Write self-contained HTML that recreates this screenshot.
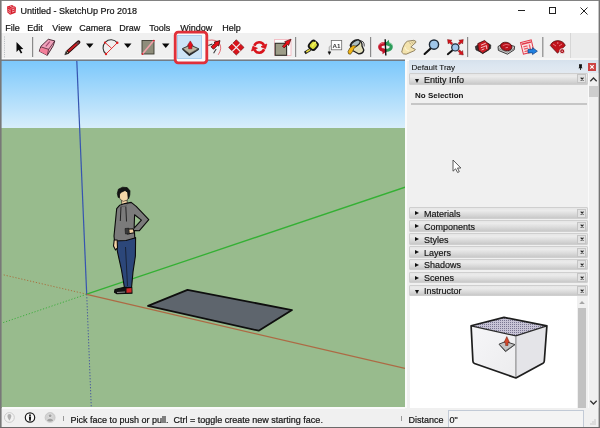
<!DOCTYPE html>
<html><head><meta charset="utf-8">
<style>
*{margin:0;padding:0;box-sizing:border-box}
html,body{width:600px;height:428px;overflow:hidden;background:#fff;font-family:"Liberation Sans",sans-serif;}
.a{position:absolute}
#win{will-change:transform;position:absolute;left:0;top:0;width:600px;height:428px;background:#fff;overflow:hidden}
.t{position:absolute;white-space:nowrap;color:#141414;font-size:9px;line-height:10px;-webkit-text-stroke:0.2px #141414}
.menu span{position:absolute;top:23px;font-size:9px;line-height:10px;color:#141414;-webkit-text-stroke:0.2px #141414}
.sep{position:absolute;top:38px;width:1px;height:20px;background:#b4b4b4}
.hdr{position:absolute;left:409px;width:178.5px;height:11.6px;background:linear-gradient(#e6e6e6,#ebebeb 25%,#dcdcdc 60%,#c9c9c9);border:1px solid #cfcfcf;border-radius:1px}
.hdr .tri{position:absolute;left:4.6px;top:2.9px;width:0;height:0;border-top:2.8px solid transparent;border-bottom:2.8px solid transparent;border-left:4.4px solid #111}
.hdr .tri.d{left:5px;top:4px;border-left:2.5px solid transparent;border-right:2.5px solid transparent;border-top:4px solid #111;border-bottom:0}
.hdr .lab{position:absolute;left:14px;top:0.6px;font-size:9px;line-height:10px;color:#111;-webkit-text-stroke:0.15px #111}
.hdr .x{position:absolute;right:0.5px;top:0.5px;width:9px;height:9px;border:1px solid #c4c4c4;background:#e2e2e2}
.hdr .x svg{position:absolute;left:-0.5px;top:-0.5px}
</style></head><body>
<div id="win">
  <!-- title -->
  <svg class="a" style="left:4px;top:2px" width="16" height="16" viewBox="4 2 16 16">
    <path d="M7,6.6 L12,4.9 L16,7.3 L15.6,12.8 L10.2,14.8 L7.4,12.6 Z" fill="#d51f2c"/>
    <path d="M7,6.6 L10.8,8.6 L16,7.3 M10.8,8.6 L10.2,14.8" fill="none" stroke="#f07080" stroke-width="0.6"/>
    <path d="M8.2,9.5 L10.3,10.6 M8.3,11.6 L10.3,12.6 M12,10 L14.6,9 M12,12 L14.6,11" stroke="#fbd0d8" stroke-width="0.8"/>
    <path d="M10,6.2 L12.5,7.4 L14,6.8" stroke="#f8c0c8" stroke-width="0.7" fill="none"/>
  </svg>
  <div class="t" style="left:20.5px;top:5.5px;font-size:9px">Untitled - SketchUp Pro 2018</div>
  <div class="a" style="left:518px;top:10px;width:7px;height:1px;background:#222"></div>
  <div class="a" style="left:549px;top:7px;width:7px;height:7px;border:1px solid #222"></div>
  <svg class="a" style="left:580px;top:7px" width="8" height="8" viewBox="0 0 8 8"><path d="M0.5 0.5 L7.5 7.5 M7.5 0.5 L0.5 7.5" stroke="#222" stroke-width="1"/></svg>

  <!-- menu -->
  <div class="menu">
    <span style="left:5.3px">File</span>
    <span style="left:27.3px">Edit</span>
    <span style="left:52.3px">View</span>
    <span style="left:79.3px">Camera</span>
    <span style="left:119.3px">Draw</span>
    <span style="left:149.3px">Tools</span>
    <span style="left:180.3px">Window</span>
    <span style="left:222.3px">Help</span>
  </div>

  <!-- toolbar -->

  <svg class="a" style="left:0;top:30px" width="600" height="35" viewBox="0 30 600 35">
    <rect x="1" y="33" width="569.5" height="27" fill="#f0f0f0"/>
    <rect x="570.5" y="33" width="28" height="26" fill="#ebebeb"/>
    <rect x="570" y="33" width="1" height="26" fill="#d6d6d6"/>
    <rect x="4" y="36.5" width="1" height="1" fill="#b4b8bc"/><rect x="4" y="38.7" width="1" height="1" fill="#b4b8bc"/><rect x="4" y="40.9" width="1" height="1" fill="#b4b8bc"/><rect x="4" y="43.1" width="1" height="1" fill="#b4b8bc"/><rect x="4" y="45.3" width="1" height="1" fill="#b4b8bc"/><rect x="4" y="47.5" width="1" height="1" fill="#b4b8bc"/><rect x="4" y="49.7" width="1" height="1" fill="#b4b8bc"/><rect x="4" y="51.9" width="1" height="1" fill="#b4b8bc"/><rect x="4" y="54.1" width="1" height="1" fill="#b4b8bc"/><rect x="4" y="56.3" width="1" height="1" fill="#b4b8bc"/>
    <!-- select -->
    <path d="M16.5,42 L16.5,52 L18.8,49.8 L20.8,53.5 L22.3,52.7 L20.4,49.2 L23.3,49 Z" fill="#0a0a0a"/>
    <rect x="32" y="37" width="1.2" height="20" fill="#8a8a8a"/>
    <!-- eraser -->
    <path d="M48.3,39.3 L54.8,40.9 L53.2,45.8 L47.3,55.3 L39.3,51.2 L40.9,46.3 Z" fill="#f0a2bb" stroke="#3a1a26" stroke-width="0.9" stroke-linejoin="round"/>
    <path d="M41.3,47 L48.6,49.3 L47.3,55.3 L39.5,51.2 Z" fill="#f37f9a"/>
    <path d="M41.3,47 L48.6,49.3 L54.6,41.2 M48.6,49.3 L47.3,55.3" fill="none" stroke="#3a1a26" stroke-width="0.7"/>
    <path d="M45.8,46.3 L49.8,41.6" stroke="#a04870" stroke-width="1.1"/>
    <!-- pencil -->
    <path d="M67.8,51.8 L78.6,42.2" stroke="#2a0a0a" stroke-width="3.6" stroke-linecap="round"/>
    <path d="M68.3,51.3 L77.2,43.4" stroke="#cc1f24" stroke-width="2"/>
    <path d="M76.6,44 L78.8,42" stroke="#6a4048" stroke-width="2"/>
    <path d="M64.8,54.8 L66.2,51 L68.8,53.4 Z" fill="#2a2a2a" stroke="#2a2a2a" stroke-width="0.6"/>
    <path d="M66.6,51.6 L68.2,53" stroke="#d8b890" stroke-width="1"/>
    <path d="M86,43.5 L93.5,43.5 L89.75,48 Z" fill="#080808"/>
    <!-- arc -->
    <path d="M106,54 A8,8 0 1 1 117.3,42.8" fill="none" stroke="#333" stroke-width="1.1"/>
    <path d="M105,42.5 L111.5,48.2 M117.3,42.8 L106,54" stroke="#e02020" stroke-width="0.9"/>
    <circle cx="105" cy="42.5" r="1.1" fill="#e02020"/><circle cx="117.3" cy="42.8" r="1.2" fill="#e02020"/><circle cx="106" cy="54" r="1.2" fill="#e02020"/>
    <path d="M124,43.5 L131.5,43.5 L127.75,48 Z" fill="#080808"/>
    <!-- rectangle -->
    <rect x="142" y="40.5" width="12" height="13.5" fill="#8f8d7b" stroke="#3a3a30" stroke-width="0.9"/>
    <path d="M142.5,54 L153.8,40.6" stroke="#f0a0a8" stroke-width="1.6"/>
    <circle cx="142.5" cy="54" r="0.9" fill="#d82030"/><circle cx="153.8" cy="40.6" r="0.9" fill="#d82030"/>
    <path d="M162,43.5 L169.5,43.5 L165.75,48 Z" fill="#080808"/>
    <!-- follow me -->
    <path d="M208.3,40.3 Q216,39 219.5,43.5 Q222.5,48.5 218.2,54.8" fill="none" stroke="#e06068" stroke-width="0.9"/>
    <path d="M208.3,45.6 L212.4,43.9 M216.2,49 L213.6,53.2" stroke="#3a3a3a" stroke-width="1.1"/>
    <path d="M211,46.8 L215,43.2 L214.3,42 L220,40.6 L218.6,46 L217.5,45.3 L213.5,49.3 Z" fill="#e81018" stroke="#3a0a0a" stroke-width="0.8" stroke-linejoin="round"/>
    <!-- move -->
    <path d="M236.3,39.7 L244,47.4 L236.3,55 L228.6,47.4 Z" fill="#d8141c" stroke="#5a0a0a" stroke-width="0.6" stroke-linejoin="round"/>
    <path d="M232.2,43.3 L240.4,51.5 M240.4,43.3 L232.2,51.5" stroke="#f0f0f0" stroke-width="1.1"/>
    <!-- rotate -->
    <path d="M254.3,45.7 A5.2,5.2 0 0 1 263.9,45.3" fill="none" stroke="#d8141c" stroke-width="2.6"/>
    <path d="M261.0,46.7 L266.8,44.0 L265.5,48.7 Z" fill="#d8141c" stroke="#d8141c" stroke-width="0.8" stroke-linejoin="round"/>
    <path d="M264.1,49.3 A5.2,5.2 0 0 1 254.5,49.7" fill="none" stroke="#d8141c" stroke-width="2.6"/>
    <path d="M257.4,48.3 L251.6,51.0 L252.9,46.3 Z" fill="#d8141c" stroke="#d8141c" stroke-width="0.8" stroke-linejoin="round"/>
    <!-- scale -->
    <rect x="274.6" y="39.4" width="16.4" height="16" fill="#fcfcfc" stroke="#f2b0b8" stroke-width="0.8"/>
    <rect x="275.2" y="43.3" width="11.4" height="12" fill="#9d9d88" stroke="#2f2f28" stroke-width="1.1"/>
    <path d="M282.4,46.2 L285.8,42.9 L284.6,41.7 L291,39.2 L288.6,45.5 L287.5,44.5 L284.1,47.9 Z" fill="#e81018" stroke="#4a0a0a" stroke-width="0.7" stroke-linejoin="round"/>
    <rect x="295" y="37" width="1.2" height="20" fill="#8a8a8a"/>
    <!-- tape -->
    <path d="M304.8,53 L310.3,49.4" stroke="#1a1a1a" stroke-width="3"/>
    <path d="M306.3,52 L310.3,49.4" stroke="#e6d83a" stroke-width="1.5"/>
    <rect x="309.5" y="41" width="7.6" height="8.6" rx="2.8" transform="rotate(40 313.3 45.3)" fill="#d8dc3a" stroke="#141414" stroke-width="1.8"/>
    <path d="M312.2,46.5 Q313.5,42.8 316,42.3" stroke="#f4f060" stroke-width="1.6" fill="none"/>
    <!-- text -->
    <rect x="331.3" y="40.4" width="10.4" height="9.4" fill="#fff" stroke="#6a6a6a" stroke-width="0.8"/>
    <text x="332.6" y="47.6" font-size="6.2" font-weight="bold" font-family="Liberation Sans" fill="#3a3a3a">A1</text>
    <path d="M331,45.5 L329.3,47.2 L329.3,52" fill="none" stroke="#b8b8b8" stroke-width="1.3"/>
    <path d="M328,51.8 L330.8,51.8 L329.4,54.6 Z" fill="#0a0a0a" stroke="#0a0a0a" stroke-width="0.5"/>
    <!-- paint -->
    <path d="M359.5,40.8 Q364.8,40.5 364.2,46.5" fill="none" stroke="#333" stroke-width="0.9"/>
    <path d="M350.2,45.2 Q352.5,39.5 358.5,40 Q362.5,41.5 362,46 L363.8,50 Q363,54 358.5,53.8 L352.5,50.5 Z" fill="#e2deb8" stroke="#1c1c1c" stroke-width="1.3" stroke-linejoin="round"/>
    <ellipse cx="355.6" cy="43.6" rx="5" ry="2.6" transform="rotate(-35 355.6 43.6)" fill="#a9bcc0" stroke="#1c1c1c" stroke-width="1.1"/>
    <path d="M353,45.5 Q349.2,47.5 348,51.5 Q347.8,54.8 350.5,54.2 Q352.6,52 354,48.5 Q355.2,46.5 357,46.3 Z" fill="#f2b514" stroke="#3a3010" stroke-width="0.6"/>
    <rect x="370" y="37" width="1.2" height="20" fill="#8a8a8a"/>
    <!-- orbit -->
    <path d="M385.5,43.8 Q379.8,43.5 379.8,47 Q380,50.5 385.5,50.5" fill="none" stroke="#c4162a" stroke-width="3.4"/>
    <path d="M384.5,42.6 Q380,42.8 378.8,45.5" fill="none" stroke="#e87080" stroke-width="1"/>
    <path d="M385.8,43.6 Q391.2,43.6 391.2,47 Q391,50.3 386,50.3" fill="none" stroke="#2c9c5a" stroke-width="3.2"/>
    <path d="M387,42.4 Q391,42.5 392.2,45" fill="none" stroke="#90d4a8" stroke-width="1"/>
    <path d="M382.5,54.2 L387,51 L382.5,47.8 Z" fill="#c4162a"/>
    <path d="M389,39.8 L385.2,43.2 L389,46.6 Z" fill="#2c9c5a"/>
    <path d="M385.2,39.3 L385.8,55.5" stroke="#111" stroke-width="1.4"/>
    <!-- pan -->
    <path d="M401.7,52.2 Q402.5,47.5 404.2,44.8 Q405.5,42 407.5,41.2 L413.8,40.3 Q416.2,40.8 416,42.3 L410.8,47 L415.4,49.5 Q414.5,51 413.2,51.2 L406.2,54.2 Q403,54.5 401.7,52.2 Z" fill="#f3e3ae" stroke="#7a6a48" stroke-width="0.8" stroke-linejoin="round"/>
    <path d="M409.5,42.5 L411,44.5 M411.5,41.8 L413,43.8 M413.5,41.3 L414.6,42.8" stroke="#9a8a68" stroke-width="0.6"/>
    <path d="M405,47 Q405.5,50.5 409,50.8" fill="none" stroke="#fbf3d0" stroke-width="1.2"/>
    <!-- zoom -->
    <path d="M430.6,48.4 L424.6,54" stroke="#111" stroke-width="2.1" stroke-linecap="round"/>
    <circle cx="434" cy="44.6" r="4.6" fill="#9fc6ea" stroke="#1e2a38" stroke-width="1.4"/>
    <!-- zoom extents -->
    <path d="M452.5,50.2 L447.8,54.2" stroke="#111" stroke-width="1.9" stroke-linecap="round"/>
    <circle cx="455.3" cy="47.4" r="3.6" fill="#9fc6ea" stroke="#1e2a38" stroke-width="1.2"/>
    <path d="M447.5,39.5 L452,40.2 L450.8,41.3 L452.8,43.3 L451.3,44.8 L449.3,42.8 L448.2,44 Z" fill="#d8141c" stroke="#5a0a0a" stroke-width="0.4"/>
    <path d="M463.3,39.5 L462.6,44 L461.5,42.8 L459.5,44.8 L458,43.3 L460,41.3 L458.8,40.2 Z" fill="#d8141c" stroke="#5a0a0a" stroke-width="0.4"/>
    <path d="M463.3,55 L458.8,54.3 L460,53.2 L458,51.2 L459.5,49.7 L461.5,51.7 L462.6,50.5 Z" fill="#d8141c" stroke="#5a0a0a" stroke-width="0.4"/>
    <rect x="467" y="37" width="1.2" height="20" fill="#8a8a8a"/>
    <!-- 3d warehouse -->
    <path d="M475.3,46.5 L479.5,44 L479.5,51.5 L476,50 Z M487.5,43 L490.8,45 L490.6,48.5 L487.5,50.5 Z" fill="#3a3a3a" stroke="#1a1a1a" stroke-width="0.6" stroke-linejoin="round"/>
    <path d="M477.8,43.6 L484.6,40.5 L489.4,44.8 L488.6,50 L482.7,53.6 L478.4,50.6 Z" fill="#c81c24" stroke="#3a0808" stroke-width="0.8" stroke-linejoin="round"/>
    <path d="M478.5,50.4 L482.7,53.3 L488.6,49.6" fill="none" stroke="#2a2a2a" stroke-width="1"/>
    <path d="M481,45.2 L485.8,43.2 M480.8,47.8 L486.5,45.6 L486.8,49 M481.5,50 L484.3,48.9" stroke="#f8d0d4" stroke-width="0.9" fill="none"/>
    <!-- extension warehouse -->
    <path d="M498,46.6 L503.5,43.2 L514.6,46.4 L514.2,49.8 L507.5,54.2 L498.4,50.4 Z" fill="#cfcfcf" stroke="#2a2a2a" stroke-width="0.9" stroke-linejoin="round"/>
    <path d="M499,48.8 L507.5,52.2 L513.8,48.6" fill="none" stroke="#555" stroke-width="0.6"/>
    <ellipse cx="506.2" cy="46.5" rx="5.8" ry="4.2" transform="rotate(12 506.2 46.5)" fill="#b8121c" stroke="#3a0808" stroke-width="0.7"/>
    <path d="M502.8,45.6 Q506,43.6 509.5,45" fill="none" stroke="#e8707a" stroke-width="0.9"/>
    <path d="M505.5,47.8 L508,47.3" stroke="#f0a0a8" stroke-width="0.8"/>
    <!-- send to layout -->
    <g transform="rotate(-14 527.5 47)">
    <rect x="521.8" y="41" width="11" height="12" fill="#fbe4e6" stroke="#e23a4a" stroke-width="1"/>
    <path d="M522.5,43 L532,43" stroke="#e23a4a" stroke-width="1.6"/>
    <path d="M523.5,45.8 L527.8,45.8 M523.5,48.3 L527.8,48.3 M523.5,50.8 L527.8,50.8 M529.8,45 L529.8,51.5" stroke="#ec5a68" stroke-width="1.3"/>
    </g>
    <path d="M528,49.3 L532.5,49.3 L532.5,47.6 L537.4,51.2 L532.5,54.6 L532.5,52.9 L528,52.9 Z" fill="#2080e0" stroke="#0a3070" stroke-width="0.6" stroke-linejoin="round"/>
    <rect x="542.2" y="37" width="1.2" height="20" fill="#8a8a8a"/>
    <!-- ruby -->
    <path d="M550.3,45.5 Q552,41 557.8,40.6 Q563.5,41 565.3,45.5 L557.5,53.2 Z" fill="#c0141c" stroke="#4a0808" stroke-width="0.7" stroke-linejoin="round"/>
    <path d="M553,44 L556,46 M559,46 L562,44 M557.8,42 L557.8,44" stroke="#f09098" stroke-width="0.8"/>
    <circle cx="562.2" cy="51.2" r="2.5" fill="#a8141c" stroke="#f0f0f0" stroke-width="0.9"/>
    <circle cx="562.2" cy="51.2" r="0.8" fill="#f0b0b8"/>
  </svg>
  <div class="a" style="left:1px;top:58px;width:404px;height:1px;background:#fbfbfb"></div>
  <div class="a" style="left:1px;top:59px;width:404px;height:1px;background:#b0b3b6"></div>
  <div class="a" style="left:1px;top:60px;width:404px;height:1px;background:#737c85"></div>
  <div class="a" style="left:405px;top:58px;width:194px;height:2px;background:#f6f6f6"></div>

  <!-- viewport -->

  <svg class="a" style="left:1px;top:61px" width="404" height="347" viewBox="1 61 404 347">
    <defs><linearGradient id="sky" x1="0" y1="0" x2="0" y2="1"><stop offset="0" stop-color="#7cc8fb"/><stop offset="1" stop-color="#d8eefb"/></linearGradient></defs>
    <rect x="1" y="61" width="404" height="67.5" fill="url(#sky)"/>
    <rect x="1" y="128" width="404" height="280.5" fill="#98bb8d"/>
    <!-- dotted axes -->
    <line x1="86.7" y1="294.2" x2="2" y2="274.5" stroke="#a8703f" stroke-width="1" stroke-dasharray="1.2 1.8"/>
    <line x1="86.7" y1="294.2" x2="2" y2="323" stroke="#3fae3f" stroke-width="1" stroke-dasharray="1.2 1.8"/>
    <line x1="86.7" y1="294.2" x2="91.3" y2="408" stroke="#4050a0" stroke-width="1" stroke-dasharray="1.2 1.8"/>
    <!-- solid axes -->
    <line x1="76.8" y1="61" x2="86.7" y2="294.2" stroke="#3654b0" stroke-width="1.2"/>
    <line x1="86.7" y1="294.2" x2="405" y2="187.2" stroke="#34b034" stroke-width="1.3"/>
    <line x1="86.7" y1="294.4" x2="405" y2="368.4" stroke="#ad6a44" stroke-width="1.2"/>
    <!-- rectangle face -->
    <polygon points="187.5,289.9 292,310.1 258.7,330.7 148,305.9" fill="#5e656d" stroke="#0e0e0e" stroke-width="1.8" stroke-linejoin="round"/>
    <!-- person -->
    <g stroke="#0b0b0b" stroke-width="1.1" stroke-linejoin="round">
      <path d="M116,240 L135.6,237.5 L135.4,256 L133,272 L131.5,288 L124.5,288 L121.5,270 L117.5,252 Z" fill="#2c477a"/>
      <path d="M125.5,247 L127.5,286" fill="none" stroke-width="0.6"/>
      <path d="M115,289.5 L124.2,287.2 L131.8,287.5 L132,293.2 L117,293.8 L114.5,292.2 Z" fill="#141414"/>
      <path d="M126.5,288.5 L131.5,288 L131.6,292.5 L126.5,292.8 Z" fill="#d02828" stroke="none"/>
      <path d="M117,292.5 L125,292 " stroke="#ddd" stroke-width="0.6"/>
      <path d="M121.5,200.5 L127,200 L127.5,205.5 L122,206.5 Z" fill="#f5d5a6" stroke-width="0.6"/>
      <path d="M119.8,205.2 L124.7,203.6 L131.2,202.4 L136.2,206.4 L148.8,219.6 L139.2,230.8 L134.4,230.6 L134.8,238 L126,240.5 L114.5,241 L114,236 L116.7,208.6 Z" fill="#7b7b7b"/>
      <path d="M134.6,214.8 L141.4,220.1 L134.1,228.2 Z" fill="#98bb8d"/>
      <path d="M114.2,240 L117.2,240 L117.5,248 L115.5,250 L113.5,246 Z" fill="#f2d2a4"/>
      <path d="M127,229.2 L133.3,228.8 L134.3,232.8 L127.5,234 Z" fill="#f2d2a4"/>
      <path d="M125,228.5 L128.8,228.2 L129.5,233.8 L125.5,234 Z" fill="#3a3a3a" stroke-width="0.5"/>
      <path d="M121,206.5 L120.3,221 M125.8,206.5 L126.5,221.5" fill="none" stroke-width="0.8"/>
      <path d="M120,205 Q123,208.5 127.5,204.5" fill="none" stroke="#555" stroke-width="0.7"/>
      <path d="M119.2,192.6 L124.5,190 L127.8,192.5 L128.4,197 L127.4,200 L123.2,201.4 L120,199.2 L119,195.5 Z" fill="#f5d5a6" stroke-width="0.5"/>
      <path d="M117.3,193.5 L118.4,189.2 L122.6,187.2 L127.2,187.6 L130,190.8 L129.8,195 L128.6,198.8 L128,196.5 L127.8,192.6 L125.2,190.4 L121.5,192.2 L119.6,194 L119.4,197.6 L118.2,197.4 Z" fill="#141414" stroke-width="0.7"/>
    </g>
  </svg>
  <div class="a" style="left:2px;top:407px;width:403px;height:1px;background:#fafafa"></div>

  <!-- right panel -->
  <div class="a" style="left:405px;top:61px;width:193px;height:347px;background:#f0f0f0"></div>
  <div class="a" style="left:405px;top:61px;width:1.5px;height:347px;background:#fbfbfb"></div>
  <div class="a" style="left:408.6px;top:60.3px;width:190px;height:12.4px;background:linear-gradient(#d6e1ec,#dce6f0 40%,#e2e9f1)"></div>
  <div class="t" style="left:411.5px;top:63px;color:#111;font-size:8.1px;-webkit-text-stroke:0.1px #111">Default Tray</div>
  <svg class="a" style="left:577px;top:63px" width="7" height="8" viewBox="0 0 7 8"><path d="M2,1.2 L5,1.2 L4.8,4.2 L5.6,5.2 L1.4,5.2 L2.2,4.2 Z" fill="#111"/><rect x="3" y="5.2" width="1" height="1.6" fill="#111"/></svg>
  <div class="a" style="left:588.4px;top:63.3px;width:8px;height:7.6px;background:#cc4444"></div>
  <svg class="a" style="left:588.4px;top:63.3px" width="8" height="8" viewBox="0 0 8 8"><path d="M2.3,2.2 L5.7,5.6 M5.7,2.2 L2.3,5.6" stroke="#fff" stroke-width="1.2"/></svg>

  <div class="hdr" style="top:72.9px;height:12.4px"><div class="tri d" style="top:5px"></div><div class="lab" style="top:1.5px">Entity Info</div><div class="x"><svg width="8" height="8" viewBox="0 0 8 8"><path d="M2.7,2.7 L5.5,5.5 M5.5,2.7 L2.7,5.5" stroke="#222" stroke-width="1.1"/></svg></div></div>
  <div class="t" style="left:415px;top:90.5px;font-weight:bold;color:#111;font-size:8px;-webkit-text-stroke:0">No Selection</div>
  <div class="a" style="left:411px;top:103px;width:176px;height:2px;background:#c6c6c6"></div>
  <!-- scrollbar outer -->
  <div class="a" style="left:587.5px;top:73px;width:1px;height:335px;background:#fafafa"></div>
  <svg class="a" style="left:589px;top:76px" width="9" height="7" viewBox="0 0 9 7"><path d="M1.3,5.2 L4.5,2 L7.7,5.2" fill="none" stroke="#333" stroke-width="1.3"/></svg>
  <div class="a" style="left:589px;top:85.5px;width:9px;height:11px;background:#cdcdcd"></div>
  <svg class="a" style="left:589px;top:399px" width="9" height="7" viewBox="0 0 9 7"><path d="M1.3,1.8 L4.5,5 L7.7,1.8" fill="none" stroke="#333" stroke-width="1.3"/></svg>
  <div class="hdr" style="top:207.2px"><div class="tri"></div><div class="lab">Materials</div><div class="x"><svg width="8" height="8" viewBox="0 0 8 8"><path d="M2.7,2.7 L5.5,5.5 M5.5,2.7 L2.7,5.5" stroke="#222" stroke-width="1.1"/></svg></div></div>
  <div class="hdr" style="top:220.2px"><div class="tri"></div><div class="lab">Components</div><div class="x"><svg width="8" height="8" viewBox="0 0 8 8"><path d="M2.7,2.7 L5.5,5.5 M5.5,2.7 L2.7,5.5" stroke="#222" stroke-width="1.1"/></svg></div></div>
  <div class="hdr" style="top:233.1px"><div class="tri"></div><div class="lab">Styles</div><div class="x"><svg width="8" height="8" viewBox="0 0 8 8"><path d="M2.7,2.7 L5.5,5.5 M5.5,2.7 L2.7,5.5" stroke="#222" stroke-width="1.1"/></svg></div></div>
  <div class="hdr" style="top:246px"><div class="tri"></div><div class="lab">Layers</div><div class="x"><svg width="8" height="8" viewBox="0 0 8 8"><path d="M2.7,2.7 L5.5,5.5 M5.5,2.7 L2.7,5.5" stroke="#222" stroke-width="1.1"/></svg></div></div>
  <div class="hdr" style="top:258.9px"><div class="tri"></div><div class="lab">Shadows</div><div class="x"><svg width="8" height="8" viewBox="0 0 8 8"><path d="M2.7,2.7 L5.5,5.5 M5.5,2.7 L2.7,5.5" stroke="#222" stroke-width="1.1"/></svg></div></div>
  <div class="hdr" style="top:271.8px"><div class="tri"></div><div class="lab">Scenes</div><div class="x"><svg width="8" height="8" viewBox="0 0 8 8"><path d="M2.7,2.7 L5.5,5.5 M5.5,2.7 L2.7,5.5" stroke="#222" stroke-width="1.1"/></svg></div></div>
  <div class="hdr" style="top:284.6px"><div class="tri d"></div><div class="lab">Instructor</div><div class="x"><svg width="8" height="8" viewBox="0 0 8 8"><path d="M2.7,2.7 L5.5,5.5 M5.5,2.7 L2.7,5.5" stroke="#222" stroke-width="1.1"/></svg></div></div>

  <div class="a" style="left:409.5px;top:296px;width:167px;height:112.5px;background:#fff"></div>
  <div class="a" style="left:576.5px;top:296px;width:11px;height:112.5px;background:#f0f0f0"></div>
  <svg class="a" style="left:578px;top:300px" width="8" height="5" viewBox="0 0 8 5"><path d="M1.2,4 L4,1 L6.8,4 Z" fill="#a6a6a6"/></svg>
  <div class="a" style="left:577.7px;top:308.2px;width:8.6px;height:100.3px;background:#c2c2c2"></div>

  <svg class="a" style="left:409px;top:296px" width="167" height="112" viewBox="409 296 167 112">
    <defs>
      <pattern id="dots" x="0" y="0" width="2" height="2" patternUnits="userSpaceOnUse">
        <rect width="2" height="2" fill="#c8c4d6"/>
        <rect x="0" y="0" width="1" height="1" fill="#7a7692"/>
      </pattern>
      <linearGradient id="lf" x1="0" y1="0" x2="1" y2="1"><stop offset="0" stop-color="#f6f6f8"/><stop offset="1" stop-color="#ececee"/></linearGradient>
    </defs>
    <path d="M471.1,325.8 L515.9,335.9 L515.9,378 L474.5,363.5 Q472.9,362.8 472.9,361 Z" fill="url(#lf)"/>
    <path d="M515.9,335.9 L546.9,325.8 L544.3,361 Q544.2,362.5 543,363.2 L515.9,378 Z" fill="#e4e4e8"/>
    <path d="M471.1,325.8 L504,317.4 L546.9,325.8 L515.9,335.9 Z" fill="url(#dots)"/>
    <path d="M515.9,336.5 L515.9,377.5" stroke="#707070" stroke-width="0.9"/>
    <path d="M471.1,325.8 L515.9,335.9 L546.9,325.8" fill="none" stroke="#2a2a2a" stroke-width="1.3"/>
    <path d="M471.1,325.8 L504,317.4 L546.9,325.8 L544.3,361 Q544.2,362.5 543,363.2 L515.9,378 L474.5,363.5 Q472.9,362.8 472.9,361 Z" fill="none" stroke="#1e1e1e" stroke-width="1.7" stroke-linejoin="round"/>
    <path d="M499,344.2 L505.5,341.5 L515,344.6 L505.5,351.6 Z" fill="#c4c4c4" stroke="#2e2e2e" stroke-width="0.9" stroke-linejoin="round"/>
    <path d="M499.5,344.5 L505.5,350.8 L514.5,344.8" fill="none" stroke="#555" stroke-width="0.8"/>
    <path d="M505.6,345.5 L505.6,342.6 L504,342.6 L506.8,336.6 L509.6,342.6 L508,342.6 L508,345.5 Z" fill="#d4482c" stroke="#6a2010" stroke-width="0.5"/>
  </svg>
  <svg class="a" style="left:450px;top:158px" width="14" height="17" viewBox="450 158 14 17">
    <path d="M453,160 L453,171.2 L455.6,168.8 L457.6,172.5 L459.3,171.7 L457.5,168 L460.9,168 Z" fill="#fff" stroke="#4a4a4a" stroke-width="0.9" stroke-linejoin="round"/>
  </svg>
  <!-- status bar -->
  <div class="a" style="left:1px;top:407.5px;width:598px;height:20px;background:#f0f0f0"></div>
  <div class="a" style="left:2px;top:407.5px;width:403px;height:1px;background:#fafafa"></div>
  <div class="t" style="left:70.5px;top:414.5px">Pick face to push or pull.&nbsp; Ctrl = toggle create new starting face.</div>
  <svg class="a" style="left:2px;top:410px" width="60" height="16" viewBox="2 410 60 16">
    <circle cx="9.4" cy="417.5" r="4.9" fill="#f2f2f2" stroke="#c6c6c6" stroke-width="0.9"/>
    <path d="M7.4,416 A2,2 0 0 1 11.4,416 Q11.4,417.5 9.4,420.8 Q7.4,417.5 7.4,416 Z" fill="#b0b0b0"/>
    <circle cx="30" cy="417.5" r="4.7" fill="#fafafa" stroke="#1a1a1a" stroke-width="1.2"/>
    <circle cx="30" cy="415.2" r="0.95" fill="#111"/>
    <path d="M28.9,416.6 L31.1,416.6 L30.8,420.8 L29.2,420.8 Z" fill="#111"/>
    <circle cx="50.1" cy="417.5" r="5" fill="#d2d2d2" stroke="#c0c0c0" stroke-width="0.7"/>
    <circle cx="50.1" cy="415.8" r="1.8" fill="#a0a0a0" stroke="#f4f4f4" stroke-width="0.5"/>
    <path d="M46.5,420.8 Q47,418.3 50.1,418.2 Q53.2,418.3 53.7,420.8 Q52,422 50.1,422 Q48.2,422 46.5,420.8 Z" fill="#a0a0a0" stroke="#f4f4f4" stroke-width="0.5"/>
  </svg>
  <svg class="a" style="left:583px;top:418px" width="14" height="9" viewBox="583 418 14 9">
    <rect x="594.5" y="419.5" width="1" height="1" fill="#a0a0a0"/>
    <rect x="592.5" y="421.5" width="1" height="1" fill="#a0a0a0"/><rect x="594.5" y="421.5" width="1" height="1" fill="#a0a0a0"/>
    <rect x="590.5" y="423.5" width="1" height="1" fill="#a0a0a0"/><rect x="592.5" y="423.5" width="1" height="1" fill="#a0a0a0"/><rect x="594.5" y="423.5" width="1" height="1" fill="#a0a0a0"/>
  </svg>
  <div class="a" style="left:63px;top:415.5px;width:1px;height:5px;background:#999"></div>
  <div class="a" style="left:401px;top:415.5px;width:1px;height:5.5px;background:#999"></div>
  <div class="t" style="left:408.5px;top:414.5px">Distance</div>
  <div class="a" style="left:448.2px;top:410.3px;width:135.5px;height:16.5px;background:#f4f4f4;border:1px solid #c2cad6;border-bottom:0"></div>
  <div class="t" style="left:449.5px;top:414.5px">0"</div>
  <svg class="a" style="left:170px;top:28px" width="42" height="40" viewBox="170 28 42 40">
    <rect x="176" y="33.5" width="30" height="28.5" fill="#fafafa"/>
    <!-- push pull highlighted -->
    <rect x="177.5" y="35.5" width="24" height="23" fill="#cde4f7" stroke="#9cc7ec" stroke-width="0.8"/>
    
    <path d="M182.4,48.6 L190.3,45 L198.8,48.8 L189.5,54 Z" fill="#bab6a2" stroke="#2a2a2a" stroke-width="0.9" stroke-linejoin="round"/>
    <path d="M182.6,49 L189.4,55.2 L198.6,49.2" fill="none" stroke="#2a2a2a" stroke-width="1.6" stroke-linejoin="round"/>
    <path d="M183.6,49.2 L189.5,53 L197.6,49.3" fill="none" stroke="#8a877a" stroke-width="0.6"/>
    <path d="M188.6,48.8 L188.6,45.6 L187.4,45.6 L190.3,40.9 L193.1,45.6 L191.9,45.6 L191.9,48.8 Z" fill="#e3101e" stroke="#7a0a10" stroke-width="0.5" stroke-linejoin="round"/>
    <rect x="175.2" y="32.2" width="31.6" height="30.6" rx="3" fill="none" stroke="#e0303a" stroke-width="2.8"/>
  </svg>
  <!-- borders -->
  <div class="a" style="left:0;top:0;width:600px;height:1px;background:#828282"></div>
  <div class="a" style="left:0;top:0;width:1px;height:428px;background:#787878"></div>
  <div class="a" style="left:1px;top:1px;width:1px;height:426px;background:rgba(120,120,120,0.6)"></div>
  <div class="a" style="left:599px;top:0;width:1px;height:428px;background:#747474"></div>
  <div class="a" style="left:598px;top:1px;width:1px;height:426px;background:rgba(110,110,110,0.4)"></div>
  <div class="a" style="left:0;top:427px;width:600px;height:1px;background:#6a6a6a"></div>
</div>
</body></html>
